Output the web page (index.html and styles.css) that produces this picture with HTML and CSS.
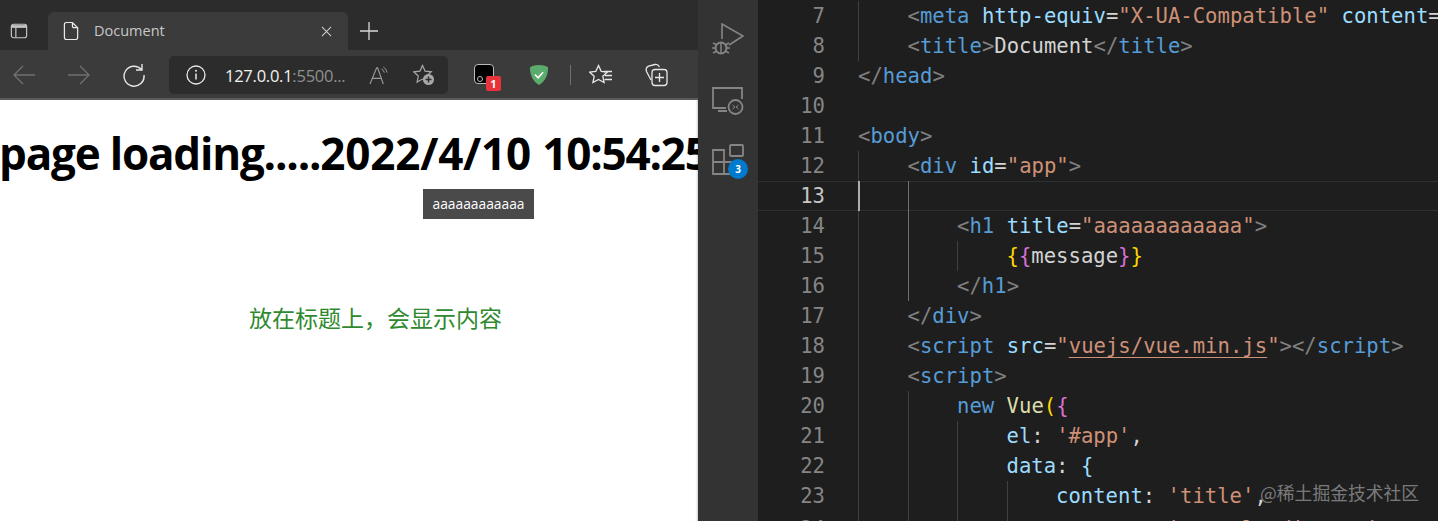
FILE: index.html
```html
<!DOCTYPE html>
<html lang="zh">
<head>
<meta charset="utf-8">
<title>Document</title>
<link rel="stylesheet" href="styles.css">
</head>
<body>
<div class="screen">
  <section class="browser">
    <div class="tabstrip">
      <svg class="side-icon" viewBox="0 0 20 20"><rect x="1.5" y="2.500" width="17" height="15" rx="2.500" fill="none" stroke="#c8c8c8" stroke-width="1.300"/><path d="M2 3.500h16v3H2z" fill="#c8c8c8"/><path d="M6.500 6v11" stroke="#c8c8c8" stroke-width="1.300"/></svg>
      <div class="tab">
        <svg class="doc-icon" viewBox="0 0 18 20"><path d="M3.500 1h6.500l5.500 5.500v10.500a2 2 0 0 1-2 2h-10a2 2 0 0 1-2-2v-14a2 2 0 0 1 2-2zM10 1v4a1.500 1.500 0 0 0 1.500 1.500h4" fill="none" stroke="#e8e8e8" stroke-width="1.300"/></svg>
        <span class="tab-title">Document</span>
        <svg class="close-icon" viewBox="0 0 12 12"><path d="M1 1l10 10M11 1l-10 10" stroke="#cfcfcf" stroke-width="1.100"/></svg>
      </div>
      <svg class="plus-icon" viewBox="0 0 18 18"><path d="M9 0v18M0 9h18" stroke="#d8d8d8" stroke-width="1.300"/></svg>
    </div>
    <div class="toolbar">
      <svg class="tool" viewBox="0 0 24 24"><path d="M23 12H2M11 3l-9 9 9 9" fill="none" stroke="#707070" stroke-width="1.300"/></svg>
      <svg class="tool" viewBox="0 0 24 24"><path d="M1 12h21M13 3l9 9-9 9" fill="none" stroke="#707070" stroke-width="1.300"/></svg>
      <svg class="tool" viewBox="0 0 24 24"><path d="M19.500 6.500A10 10 0 1 0 22 12M20 1v6h-6" fill="none" stroke="#e6e6e6" stroke-width="1.400"/></svg>
      <div class="address">
        <svg class="info-icon" viewBox="0 0 20 20"><circle cx="10" cy="10" r="9" fill="none" stroke="#e8e8e8" stroke-width="1.300"/><path d="M10 8.500v6" stroke="#e8e8e8" stroke-width="1.500"/><circle cx="10" cy="5.800" r="1" fill="#e8e8e8"/></svg>
        <span class="url"><span class="host">127.0.0.1</span>:5500...</span>
        <svg class="read-icon" viewBox="0 0 22 20"><path d="M1 19L8 2h1l6 17M3.500 13h10" fill="none" stroke="#9a9a9a" stroke-width="1.200"/><path d="M13 3a5 5 0 0 1 3 4M15 1a8 8 0 0 1 4 6" fill="none" stroke="#9a9a9a" stroke-width="1"/></svg>
        <svg class="fav-icon" viewBox="0 0 22 22"><path d="M9.500 1.500l2.600 5.600 6.200.7-4.600 4.200 1.200 6.100-5.400-3-5.400 3 1.200-6.100-4.600-4.200 6.200-.7z" fill="none" stroke="#a8a8a8" stroke-width="1.200"/><circle cx="15.500" cy="15.500" r="5.500" fill="#a8a8a8"/><path d="M15.500 12.500v6M12.500 15.500h6" stroke="#2c2c2c" stroke-width="1.400"/></svg>
      </div>
      <div class="ext">
        <span class="ext-box"><span class="ext-dot"></span></span>
        <span class="ext-badge">1</span>
      </div>
      <svg class="shield" viewBox="0 0 22 24"><path d="M11 1c4 0 7 1 10 2.500C21 12 18 19 11 23 4 19 1 12 1 3.500 4 2 7 1 11 1z" fill="#5cab6e"/><path d="M6.500 11.500l3.500 3.500 5.500-6" fill="none" stroke="#fff" stroke-width="1.800"/></svg>
      <span class="divider"></span>
      <svg class="tool tool-fav" viewBox="0 0 24 24"><path d="M9.500 2.500l2.700 5.800 6.300.7-4.700 4.300 1.300 6.200-5.600-3.100-5.600 3.100 1.300-6.200-4.700-4.300 6.300-.7z" fill="#3b3b3b" stroke="#e8e8e8" stroke-width="1.300"/><path d="M15 8.500h8M16 12.500h7M15.500 16.500h7.500" stroke="#e8e8e8" stroke-width="1.300"/></svg>
      <svg class="tool tool-coll" viewBox="0 0 24 24"><path d="M7 17L2.500 8.500C1.800 6 2.500 4 4.500 3.200L11 1.500c2-.3 3.500.5 4.500 2.500" fill="none" stroke="#e8e8e8" stroke-width="1.300"/><rect x="8" y="6.500" width="15" height="16" rx="3" fill="#3b3b3b" stroke="#e8e8e8" stroke-width="1.300"/><path d="M15.500 10v9M11 14.500h9" stroke="#e8e8e8" stroke-width="1.300"/></svg>
    </div>
    <main class="page">
      <h1 class="heading"><span class="lead">page loading.....</span><span class="date">2022/4/10 </span><span class="time">10:54:25</span></h1>
      <p class="note">放在标题上，会显示内容</p>
      <div class="tooltip">aaaaaaaaaaaa</div>
    </main>
  </section>

  <nav class="activity">
    <svg class="act-icon" viewBox="0 0 36 36"><path d="M12 16V1l21 12-14 9" fill="none" stroke="#858585" stroke-width="1.600"/><circle cx="11" cy="25" r="5.500" fill="none" stroke="#858585" stroke-width="2"/><path d="M11 19v11M3 20l4 2M3 30l4-2M2 25h4M16 25h4M19 20l-4 2M19 30l-4-2" stroke="#858585" stroke-width="1.500"/></svg>
    <svg class="act-icon" viewBox="0 0 36 36"><path d="M16 27H3V7h29v11M8 30h9" fill="none" stroke="#858585" stroke-width="1.800"/><circle cx="25.500" cy="26" r="7" fill="#333" stroke="#858585" stroke-width="1.800"/><path d="M22.500 24l2.500 2-2.500 2M28.500 24l-2.500 2 2.500 2" fill="none" stroke="#858585" stroke-width="1"/></svg>
    <div class="act-ext">
      <svg class="act-icon" viewBox="0 0 36 36"><path d="M3 10h11v24H3zM3 22h22v12H14" fill="none" stroke="#858585" stroke-width="1.800"/><rect x="20" y="5" width="13" height="11" rx="1" fill="none" stroke="#858585" stroke-width="1.800"/></svg>
      <span class="act-badge">3</span>
    </div>
  </nav>

  <section class="editor">
    <div class="row"><span class="ln">7</span><span class="ind"></span><code><i class="p">&lt;</i><i class="t">meta</i> <i class="a">http-equiv</i><i class="w">=</i><i class="s">"X-UA-Compatible"</i> <i class="a">content</i><i class="w">=</i><i class="s">"IE=edge"</i><i class="p">&gt;</i></code></div>
    <div class="row"><span class="ln">8</span><span class="ind"></span><code><i class="p">&lt;</i><i class="t">title</i><i class="p">&gt;</i><i class="w">Document</i><i class="p">&lt;/</i><i class="t">title</i><i class="p">&gt;</i></code></div>
    <div class="row"><span class="ln">9</span><code><i class="p">&lt;/</i><i class="t">head</i><i class="p">&gt;</i></code></div>
    <div class="row"><span class="ln">10</span></div>
    <div class="row"><span class="ln">11</span><code><i class="p">&lt;</i><i class="t">body</i><i class="p">&gt;</i></code></div>
    <div class="row"><span class="ln">12</span><span class="ind"></span><code><i class="p">&lt;</i><i class="t">div</i> <i class="a">id</i><i class="w">=</i><i class="s">"app"</i><i class="p">&gt;</i></code></div>
    <div class="row current"><span class="ln">13</span><span class="ind caret"></span><span class="ind hot"></span></div>
    <div class="row"><span class="ln">14</span><span class="ind"></span><span class="ind hot"></span><code><i class="p">&lt;</i><i class="t">h1</i> <i class="a">title</i><i class="w">=</i><i class="s">"aaaaaaaaaaaa"</i><i class="p">&gt;</i></code></div>
    <div class="row"><span class="ln">15</span><span class="ind"></span><span class="ind hot"></span><span class="ind"></span><code><i class="y">{</i><i class="m">{</i><i class="w">message</i><i class="m">}</i><i class="y">}</i></code></div>
    <div class="row"><span class="ln">16</span><span class="ind"></span><span class="ind hot"></span><code><i class="p">&lt;/</i><i class="t">h1</i><i class="p">&gt;</i></code></div>
    <div class="row"><span class="ln">17</span><span class="ind"></span><code><i class="p">&lt;/</i><i class="t">div</i><i class="p">&gt;</i></code></div>
    <div class="row"><span class="ln">18</span><span class="ind"></span><code><i class="p">&lt;</i><i class="t">script</i> <i class="a">src</i><i class="w">=</i><i class="s">"<u>vuejs/vue.min.js</u>"</i><i class="p">&gt;&lt;/</i><i class="t">script</i><i class="p">&gt;</i></code></div>
    <div class="row"><span class="ln">19</span><span class="ind"></span><code><i class="p">&lt;</i><i class="t">script</i><i class="p">&gt;</i></code></div>
    <div class="row"><span class="ln">20</span><span class="ind"></span><span class="ind"></span><code><i class="t">new</i> <i class="f">Vue</i><i class="y">(</i><i class="m">{</i></code></div>
    <div class="row"><span class="ln">21</span><span class="ind"></span><span class="ind"></span><span class="ind"></span><code><i class="a">el</i><i class="w">:</i> <i class="s">'#app'</i><i class="w">,</i></code></div>
    <div class="row"><span class="ln">22</span><span class="ind"></span><span class="ind"></span><span class="ind"></span><code><i class="a">data</i><i class="w">:</i> <i class="a">{</i></code></div>
    <div class="row"><span class="ln">23</span><span class="ind"></span><span class="ind"></span><span class="ind"></span><span class="ind"></span><code><i class="a">content</i><i class="w">:</i> <i class="s">'title'</i><i class="w">,</i></code></div>
    <div class="row row-last"><span class="ln">24</span><span class="ind"></span><span class="ind"></span><span class="ind"></span><span class="ind"></span><code><i class="a">message</i><i class="w">:</i> <i class="s">'page loading...'</i></code></div>
    <div class="watermark">@稀土掘金技术社区</div>
  </section>
</div>
</body>
</html>
```
FILE: styles.css
```css
* { box-sizing: border-box; }
html, body { margin: 0; height: 100%; overflow: hidden; background: #1e1e1e; }
.screen { display: grid; grid-template-columns: 698px 60px 1fr; height: 521px; overflow: hidden; }

/* browser */
.browser { display: flex; flex-direction: column; position: relative; min-width: 0; overflow: hidden; background: #fff; }
.tabstrip { height: 50px; flex: none; background: #2c2c2c; display: flex; align-items: flex-end; padding-left: 10px; }
.side-icon { width: 18px; height: 18px; margin-bottom: 10px; }
.tab { width: 300px; height: 38px; margin-left: 20px; background: #3b3b3b; border-radius: 6px 6px 0 0; display: flex; align-items: center; padding-left: 15px; }
.doc-icon { width: 17px; height: 20px; flex: none; }
.tab-title { margin: -2px 0 0 14px; color: #c8c8c8; font: 14.5px "Open Sans", sans-serif; }
.close-icon { width: 11px; height: 11px; margin-left: auto; margin-right: 16px; }
.plus-icon { width: 18px; height: 18px; margin: 0 0 10px 12px; }
.toolbar { height: 50px; flex: none; background: #3b3b3b; border-bottom: 2px solid #5a5a5a; display: flex; align-items: center; padding: 2px 0 0 12px; }
.tool { width: 24px; height: 24px; flex: none; margin-right: 31px; }
.toolbar .tool:nth-child(3) { margin-right: 23px; }
.address { width: 279px; height: 38px; flex: none; background: #2c2c2c; border-radius: 5px; display: flex; align-items: center; padding-left: 17px; }
.info-icon { width: 20px; height: 20px; flex: none; }
.url { margin-left: 19px; width: 128px; flex: none; font: 16.5px "Open Sans", sans-serif; color: #8f8f8f; letter-spacing: -.25px; white-space: nowrap; }
.host { color: #f2f2f2; }
.read-icon { width: 21px; height: 19px; margin-left: 16px; flex: none; }
.fav-icon { width: 22px; height: 22px; margin-left: 23px; flex: none; }
.ext { position: relative; flex: none; width: 20px; height: 22px; margin-left: 26px; }
.ext-box { display: block; position: relative; width: 20px; height: 20px; background: #000; border: 1px solid #bbb; border-radius: 4px; }
.ext-dot { position: absolute; left: 2px; top: 11px; width: 6px; height: 6px; border: 1px solid #bbb; border-radius: 50%; }
.ext-badge { position: absolute; left: 12px; top: 12px; width: 15px; height: 15px; background: #e8333a; border-radius: 2px; color: #fff; font: bold 11px/15px "Open Sans", sans-serif; text-align: center; }
.shield { width: 20px; height: 22px; margin-left: 35px; flex: none; }
.divider { width: 1px; height: 20px; background: #6e6e6e; margin-left: 21px; margin-right: 18px; flex: none; }
.page { flex: 1; position: relative; background: #fff; overflow: hidden; box-shadow: inset -2px 0 2px -1px #ccc; }
.heading { margin: 26px 0 0 -1px; font: bold 44px/55px "Open Sans", sans-serif; color: #000; white-space: nowrap; }
.lead { letter-spacing: -1.2px; }
.date { letter-spacing: -.2px; }
.time { letter-spacing: -1.2px; }
.note { margin: 121px 0 0 249px; font: 23px/30px "Noto Sans CJK SC", sans-serif; color: #2f8a2f; }
.tooltip { position: absolute; left: 423px; top: 89px; width: 111px; height: 30px; background: #4a4a4a; color: #fff; font: 13.8px/30px "Open Sans", sans-serif; text-align: center; }

/* activity bar */
.activity { background: #333; display: flex; flex-direction: column; align-items: center; padding: 23px 0 0 0; gap: 22px; }
.act-icon { width: 36px; height: 36px; display: block; }
.act-ext { position: relative; margin-top: 1px; width: 36px; height: 36px; }
.act-badge { position: absolute; left: 18px; top: 19px; width: 20px; height: 20px; border-radius: 50%; background: #007acc; color: #fff; font: bold 10px/20px "Open Sans", sans-serif; text-align: center; }

/* editor */
.editor { background: #1e1e1e; position: relative; overflow: hidden; min-width: 0; padding-top: 1px; }
.row { height: 30px; display: flex; white-space: nowrap; position: relative; }
.ln { width: 67px; flex: none; margin-right: 33px; text-align: right; font: 20.6px/30px "DejaVu Sans Mono", monospace; color: #858585; }
.ind { width: 49.5px; flex: none; border-left: 1px solid #404040; }
.ind.hot { border-left-color: #707070; }
.ind.caret { border-left: 2px solid #aeafad; }
code { font: 20.6px/30px "DejaVu Sans Mono", monospace; white-space: pre; color: #d4d4d4; }
code i { font-style: normal; }
.row-last { padding-top: 3px; }
.row-last .ind { margin-top: -3px; }
.current { box-shadow: inset 0 1px 0 #2f2f2f, inset 0 -1px 0 #2f2f2f; }
.current .ln { color: #c6c6c6; }
.p { color: #808080; }
.t { color: #569cd6; }
.a { color: #9cdcfe; }
.s { color: #ce9178; }
.w { color: #d4d4d4; }
.y { color: #ffd700; }
.m { color: #da70d6; }
.f { color: #dcdcaa; }
.s u { text-decoration-thickness: 1px; text-underline-offset: 4px; }
.watermark { position: absolute; left: 502px; top: 480px; font: 17.8px/24px "Noto Sans CJK SC", sans-serif; color: rgba(255, 255, 255, .42); }
```
